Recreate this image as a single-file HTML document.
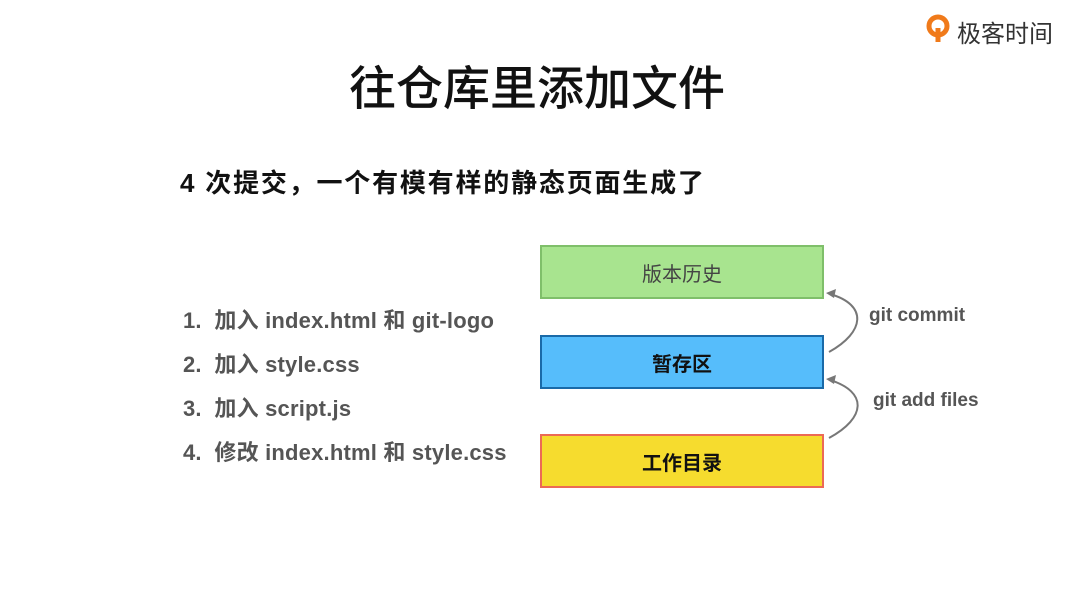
<!DOCTYPE html>
<html><head><meta charset="utf-8"><style>
body{margin:0;width:1066px;height:599px;background:#fff;position:relative;overflow:hidden;font-family:"Liberation Sans","Noto Sans CJK SC",sans-serif}
.a{position:absolute;white-space:nowrap}
.box{position:absolute;left:540px;width:280px;height:50px;display:flex;align-items:center;justify-content:center;font-size:20px}
.li{position:absolute;left:183px;font-size:22px;letter-spacing:0.2px;font-weight:bold;color:#555}
</style></head><body>
<div class="a" style="left:926px;top:14px;">
<svg width="26" height="30" viewBox="0 0 26 30"><circle cx="12" cy="12" r="9" fill="none" stroke="#f07a1a" stroke-width="5"/><path d="M12 14 L12 28" stroke="#f07a1a" stroke-width="5"/></svg>
</div>
<div class="a" style="left:957px;top:14px;font-size:24px;color:#333">极客时间</div>
<div class="a" style="left:0;width:1074px;text-align:center;top:50px;font-size:47px;font-weight:500;color:#111">往仓库里添加文件</div>
<div class="a" style="left:180px;top:163px;font-size:26px;letter-spacing:1.8px;font-weight:bold;color:#111">4 次提交，一个有模有样的静态页面生成了</div>
<div class="li" style="top:303px">1.&nbsp; 加入 index.html 和 git-logo</div>
<div class="li" style="top:347px">2.&nbsp; 加入 style.css</div>
<div class="li" style="top:391px">3.&nbsp; 加入 script.js</div>
<div class="li" style="top:435px">4.&nbsp; 修改 index.html 和 style.css</div>
<div class="box" style="top:245px;background:#a8e48f;border:2px solid #7fbf6a;color:#444">版本历史</div>
<div class="box" style="top:335px;background:#56bdfb;border:2px solid #1a6aa8;color:#111;font-weight:bold">暂存区</div>
<div class="box" style="top:434px;background:#f6dc2e;border:2px solid #ec6a55;color:#111;font-weight:bold">工作目录</div>
<svg class="a" style="left:0;top:0" width="1066" height="599">
<g fill="none" stroke="#777" stroke-width="2">
<path d="M829 352 C865 332 868 305 830 294"/>
<path d="M829 438 C866 418 868 392 830 380"/>
</g>
<path d="M826 293 L836 289 L834 298 Z" fill="#777"/>
<path d="M826 379 L836 375 L834 384 Z" fill="#777"/>
</svg>
<div class="a" style="left:869px;top:305px;font-size:19px;font-weight:bold;color:#555">git commit</div>
<div class="a" style="left:873px;top:390px;font-size:19px;font-weight:bold;color:#555">git add files</div>
</body></html>
